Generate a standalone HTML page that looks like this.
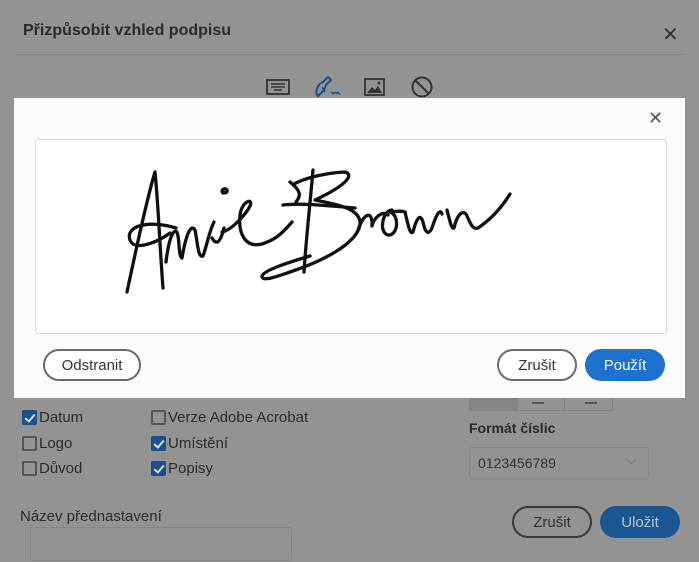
<!DOCTYPE html>
<html><head><meta charset="utf-8"><style>
*{margin:0;padding:0;box-sizing:border-box}
body{width:699px;height:562px;background:#939393;position:relative;overflow:hidden;font-family:"Liberation Sans",sans-serif;color:#2b2b2b}
.a{position:absolute}
.t{font-size:16px;font-weight:bold;left:23px;top:22px;color:#2a2a2a}
.cb{position:absolute;font-size:15px;color:#2b2b2b;display:flex;align-items:center;height:18px}
.cb i{display:inline-block;width:15px;height:15px;border:2px solid #555;border-radius:2px;margin-right:2px;position:relative}
.cb i.on{background:#1b4f8f;border-color:#1b4f8f}
.cb i.on:after{content:"";position:absolute;left:3px;top:0px;width:4px;height:8px;border:solid #ddd;border-width:0 2px 2px 0;transform:rotate(40deg)}
.btn{position:absolute;border-radius:16px;font-size:15px;display:flex;align-items:center;justify-content:center}
</style></head><body>
<div class="a t">Přizpůsobit vzhled podpisu</div>
<div class="a" style="left:662px;top:22px;font-size:20px;color:#333">✕</div>
<div class="a" style="left:16px;top:54px;width:668px;height:1px;background:#858585"></div>
<svg class="a" style="left:260px;top:70px" width="180" height="32" viewBox="260 70 180 32">
<rect x="267" y="80" width="22" height="14" fill="none" stroke="#333" stroke-width="1.8"/>
<path d="M271 84h14M271 87h14M274 90h8" stroke="#333" stroke-width="1.5"/>
<path d="M318 96c-4-4 0-12 5-14l5-5 3 3-5 5c-1 5-6 9-8 11zm4-8c2 0 3 2 2 4" fill="none" stroke="#1b4f8f" stroke-width="2"/>
<path d="M331 93c1-2 2 2 3 0s2 2 3 0 2 2 3 1" fill="none" stroke="#1b4f8f" stroke-width="1.5"/>
<rect x="365" y="79" width="19" height="16" fill="none" stroke="#333" stroke-width="1.8"/>
<path d="M367 93l5-6 3 3 3-4 4 7z" fill="#333"/><circle cx="379" cy="83" r="1.5" fill="#333"/>
<circle cx="422" cy="87" r="9.5" fill="none" stroke="#333" stroke-width="2"/><path d="M415 80l14 14" stroke="#333" stroke-width="2"/>
</svg>
<div class="cb" style="left:22px;top:408px"><i class="on"></i>Datum</div>
<div class="cb" style="left:22px;top:434px"><i></i>Logo</div>
<div class="cb" style="left:22px;top:459px"><i></i>Důvod</div>
<div class="cb" style="left:151px;top:408px"><i></i>Verze Adobe Acrobat</div>
<div class="cb" style="left:151px;top:434px"><i class="on"></i>Umístění</div>
<div class="cb" style="left:151px;top:459px"><i class="on"></i>Popisy</div>
<div class="a" style="left:469px;top:398px;width:50px;height:13px;background:#858585"></div>
<div class="a" style="left:469px;top:398px;width:144px;height:13px;border:1px solid #858585;border-top:none"></div>
<div class="a" style="left:564px;top:398px;width:1px;height:13px;background:#858585"></div>
<div class="a" style="left:532px;top:402px;width:12px;height:2px;background:#555"></div>
<div class="a" style="left:585px;top:402px;width:12px;height:2px;background:#555"></div>
<div class="a" style="left:469px;top:420px;font-size:14px;font-weight:bold;color:#2a2a2a">Formát číslic</div>
<div class="a" style="left:469px;top:447px;width:180px;height:32px;border:1px solid #888;border-radius:3px;font-size:14px;padding:7px 8px;color:#333">0123456789</div>
<div class="a" style="left:628px;top:456px;width:7px;height:7px;border:solid #7a7a7a;border-width:0 1.5px 1.5px 0;transform:rotate(45deg)"></div>
<div class="a" style="left:20px;top:508px;font-size:15px;color:#2b2b2b">Název přednastavení</div>
<div class="a" style="left:30px;top:527px;width:262px;height:34px;border:1px solid #858585;border-radius:3px"></div>
<div class="btn" style="left:512px;top:506px;width:80px;height:32px;border:2px solid #3a3a3a;color:#333">Zrušit</div>
<div class="btn" style="left:600px;top:506px;width:80px;height:32px;background:#1a5594;color:#b8c8dc">Uložit</div>

<div class="a" style="left:14px;top:98px;width:671px;height:300px;background:#fbfbfb"></div>
<div class="a" style="left:648px;top:108px;font-size:18px;color:#555">✕</div>
<div class="a" style="left:35px;top:139px;width:632px;height:195px;background:#fff;border:1px solid #d9d9d9;border-radius:3px"></div>
<svg class="a" style="left:0;top:0" width="699" height="400" viewBox="0 0 699 400">
<g fill="none" stroke="#111" stroke-width="3.3" stroke-linecap="round" stroke-linejoin="round">
<path d="M127 292C138 240 148 195 155 172C158 200 160 250 163 288"/>
<path d="M176 228C150 220 125 225 130 240C134 252 158 242 170 233"/>
<path d="M166 262C168 245 172 228 177 232C180 240 178 255 182 258C185 240 190 222 195 230C198 245 198 258 203 256C207 245 209 232 214 222"/>
<path d="M212 238C216 245 220 244 224 228"/>
<path d="M223 193c-3-3 2-6 4-3c1 3-3 4-4 1"/>
<path d="M222 232C232 230 246 214 250 206C254 198 242 200 240 215C238 235 246 248 262 244C274 240 280 236 292 222"/>
<path d="M313 170C310 205 306 240 304 272"/>
<path d="M290 182C300 190 302 195 296 202"/>
<path d="M294 184C305 178 325 173 345 172C355 175 345 186 315 200C335 204 362 208 360 225C356 245 320 262 290 272C275 277 262 282 262 276C264 270 290 262 310 256"/>
<path d="M283 205C300 203 320 205 355 208"/>
<path d="M358 230C365 210 373 212 372 226C374 218 382 210 388 215"/>
<path d="M392 210C383 210 378 232 388 235C398 236 400 215 390 212C395 212 400 210 405 212"/>
<path d="M405 212C408 225 410 235 413 232C416 220 420 212 423 222C425 232 428 236 432 228C436 215 440 208 442 214"/>
<path d="M447 210C450 222 452 230 454 228C457 215 462 210 466 214C470 222 472 230 478 228C490 220 500 210 510 194"/>
</g></svg>
<div class="btn" style="left:43px;top:349px;width:98px;height:32px;border:2px solid #6b6b6b;color:#333;background:#fff">Odstranit</div>
<div class="btn" style="left:497px;top:349px;width:80px;height:32px;border:2px solid #6b6b6b;color:#333;background:#fff">Zrušit</div>
<div class="btn" style="left:585px;top:349px;width:80px;height:32px;background:#1f71d0;color:#fff">Použít</div>
</body></html>
